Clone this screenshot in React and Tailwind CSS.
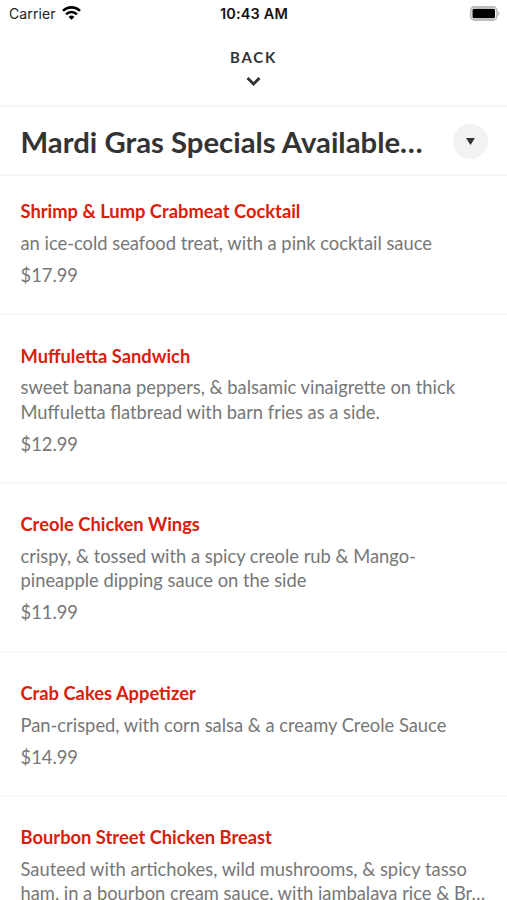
const items = [
  { name: 'Shrimp & Lump Crabmeat Cocktail', lines: ['an ice-cold seafood treat, with a pink cocktail sauce'], price: '$17.99' },
  { name: 'Muffuletta Sandwich', lines: ['sweet banana peppers, & balsamic vinaigrette on thick', 'Muffuletta flatbread with barn fries as a side.'], price: '$12.99' },
  { name: 'Creole Chicken Wings', lines: ['crispy, & tossed with a spicy creole rub & Mango-', 'pineapple dipping sauce on the side'], price: '$11.99' },
  { name: 'Crab Cakes Appetizer', lines: ['Pan-crisped, with corn salsa & a creamy Creole Sauce'], price: '$14.99' },
  { name: 'Bourbon Street Chicken Breast', lines: ['Sauteed with artichokes, wild mushrooms, & spicy tasso', 'ham, in a bourbon cream sauce, with jambalaya rice & Br…'], price: '' },
];

function StatusBar() {
  return (
    <div className="flex h-[27px] shrink-0 items-center justify-between pl-[9px] pr-[7px] font-['Inter',sans-serif] text-[14px] text-black">
      <div className="flex w-[150px] items-center gap-[6px]">
        <span className="tracking-[0.100px] text-[#222]">Carrier</span>
        <svg className="-mt-px" width="19" height="14" viewBox="0 0 19 14" fill="none" stroke="#000" strokeWidth="2.6">
          <path d="M1 4.900a12 12 0 0 1 17 0" />
          <path d="M4.100 8.300a7.600 7.600 0 0 1 10.800 0" />
          <path d="M9.500 13.800 6.600 10.900a4.100 4.100 0 0 1 5.800 0z" fill="#000" stroke="none" />
        </svg>
      </div>
      <span className="mr-px text-[14.500px] font-semibold tracking-[0.150px] text-[#111]">10:43 AM</span>
      <div className="flex w-[150px] justify-end">
        <svg width="31" height="15" viewBox="0 0 31 15">
          <rect x="1.750" y="1" width="26" height="13" rx="3.5" fill="none" stroke="#bdbdbd" strokeWidth="1.800" />
          <rect x="3.500" y="2.800" width="22.500" height="9.400" rx="1.500" />
          <path d="M29 5q3 2.500 0 5z" fill="#bdbdbd" />
        </svg>
      </div>
    </div>
  );
}

export default function App() {
  return (
    <main className="flex h-[900px] w-[507px] flex-col overflow-hidden bg-white font-['Lato',sans-serif]">
      <StatusBar />
      <div className="flex h-[80px] shrink-0 flex-col items-center border-b-2 border-[#f5f5f5] pt-[20px] text-[#333]">
        <span className="text-[15px] font-bold leading-[20px] tracking-[1.700px]">BACK</span>
        <svg className="mr-px mt-[9px]" width="15" height="11" viewBox="0 0 15 11" fill="none" stroke="#333" strokeWidth="3">
          <path d="m1.500 2 6 6 6-6" />
        </svg>
      </div>
      <header className="flex h-[69px] shrink-0 items-center justify-between border-b-2 border-[#f5f5f5] pl-[20.500px] pr-[19px] pt-[2px]">
        <h1 className="whitespace-nowrap text-[29.300px] font-bold leading-[40px] text-[#333]">Mardi Gras Specials Available…</h1>
        <button className="flex size-[35px] items-center justify-center rounded-full bg-[#f2f2f2]">
          <svg width="9" height="7" viewBox="0 0 9 7"><path d="M0 0h9L4.500 7z" fill="#333" /></svg>
        </button>
      </header>
      {items.map((item) => (
        <section key={item.name} className="shrink-0 whitespace-nowrap border-b-2 border-[#f7f7f7] pb-[26px] pl-[20.500px] pt-[28.300px] text-[18.340px] leading-[24.350px] text-[#777] first-of-type:pt-[23.300px]">
          <h2 className="font-bold text-[#d8200d]">{item.name}</h2>
          <div className="mt-[7.500px]">{item.lines.map((line) => <p key={line}>{line}</p>)}</div>
          <p className="mt-[7.500px]">{item.price}</p>
        </section>
      ))}
    </main>
  );
}
